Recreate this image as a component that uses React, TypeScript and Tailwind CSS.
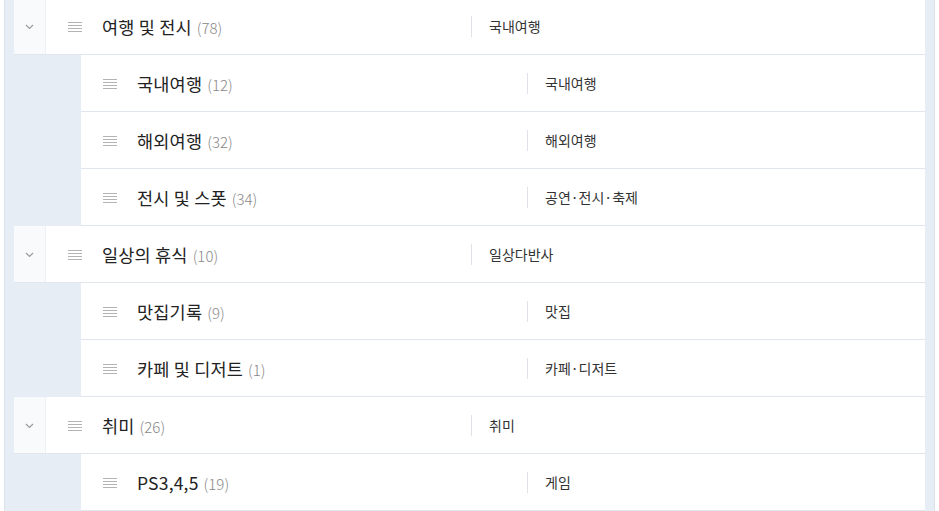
import React from 'react';

type Row = {
  title: string;
  count: number;
  label: string;
  parent?: boolean;
};

const rows: Row[] = [
  { title: '여행 및 전시', count: 78, label: '국내여행', parent: true },
  { title: '국내여행', count: 12, label: '국내여행' },
  { title: '해외여행', count: 32, label: '해외여행' },
  { title: '전시 및 스폿', count: 34, label: '공연·전시·축제' },
  { title: '일상의 휴식', count: 10, label: '일상다반사', parent: true },
  { title: '맛집기록', count: 9, label: '맛집' },
  { title: '카페 및 디저트', count: 1, label: '카페·디저트' },
  { title: '취미', count: 26, label: '취미', parent: true },
  { title: 'PS3,4,5', count: 19, label: '게임' },
];

const Handle = () => (
  <svg width="14" height="11" viewBox="0 0 14 11" className="shrink-0">
    {[0.5, 3.5, 6.5, 9.5].map((y) => (
      <line key={y} x1="0" x2="14" y1={y} y2={y} stroke="#b3b3b3" strokeWidth="1" />
    ))}
  </svg>
);

const Chevron = () => (
  <svg width="9" height="6" viewBox="0 0 9 6">
    <path d="M1 1 L4.5 4.5 L8 1" fill="none" stroke="#9a9a9a" strokeWidth="1.2" />
  </svg>
);

const CategoryRow = ({ row }: { row: Row }) => (
  <div
    className={`flex h-[57px] border-b border-[#e1e6ee] bg-white ${row.parent ? '' : 'ml-[67px]'}`}
  >
    {row.parent && (
      <div className="flex w-[32px] shrink-0 items-center justify-center border-r border-[#edf0f5] bg-[#f9fafc] pt-[2px]">
        <Chevron />
      </div>
    )}
    <div
      className={`flex shrink-0 items-center gap-[20px] pl-[22px] pt-[2px] ${row.parent ? 'w-[425px]' : 'w-[446px]'}`}
    >
      <Handle />
      <div className="flex items-baseline gap-[5px]">
        <span className="text-[17.5px] tracking-[0.2px] text-[#222]">{row.title}</span>
        <span className="text-[15px] font-light text-[#888]">({row.count})</span>
      </div>
    </div>
    <div className="flex items-center pt-[1px]">
      <div className="h-[21px] w-px bg-[#dfe3e9]" />
      <span className="pl-[17px] text-[14px] text-[#333]">{row.label}</span>
    </div>
  </div>
);

export default function App() {
  return (
    <div
      className="h-[511px] overflow-hidden bg-white"
      style={{ fontFamily: '"Noto Sans CJK KR", "Noto Sans", sans-serif' }}
    >
      <div className="-mt-[2px] ml-[4px] w-[931px] border-x border-[#dbe2ec] bg-[#e6edf5] px-[9px]">
        {rows.map((row) => (
          <CategoryRow key={row.title} row={row} />
        ))}
      </div>
    </div>
  );
}
